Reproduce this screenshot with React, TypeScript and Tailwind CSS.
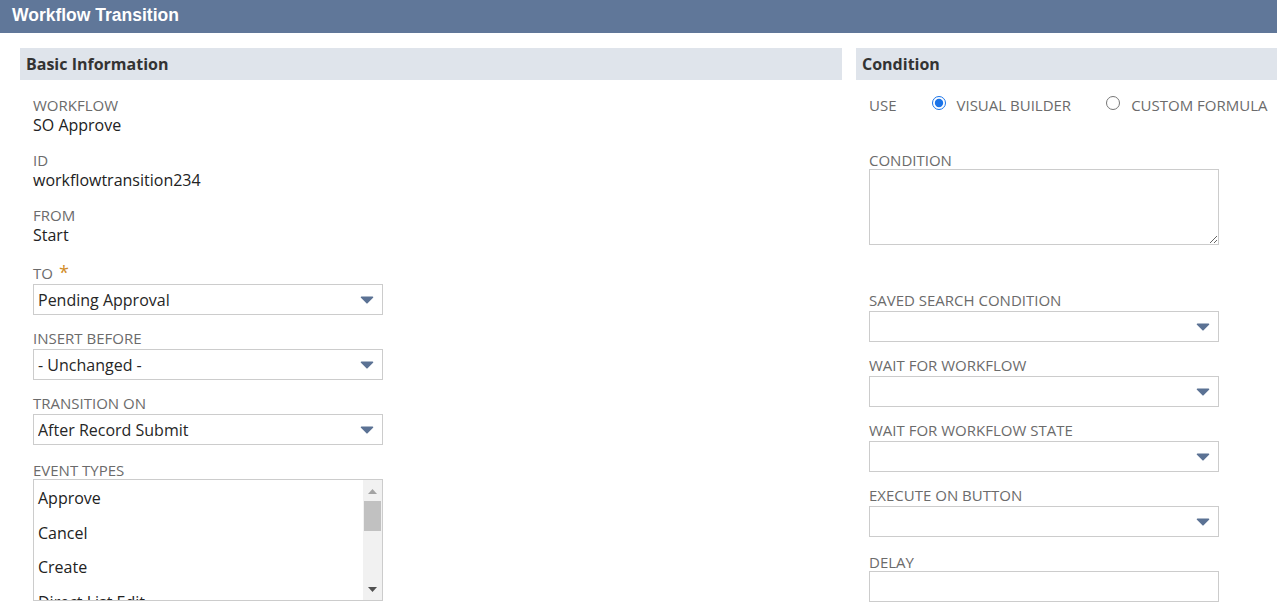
import React from "react";

const labelCls = "h-[20px] leading-[22px] text-[15px] text-[#6b6b6b] uppercase whitespace-nowrap";

function Arrow() {
  return (
    <svg width="14" height="8" viewBox="0 0 14 8" className="shrink-0">
      <path
        d="M1.5 1.2 H12.5 L7 6.8 Z"
        fill="#5b7294"
        stroke="#5b7294"
        strokeWidth="1.6"
        strokeLinejoin="round"
      />
    </svg>
  );
}

function Select({ value }: { value?: string }) {
  return (
    <div className="w-[350px] h-[31px] border border-[#cccccc] bg-white flex items-center pl-[4px] pr-[8px]">
      <span className="flex-1 text-[16px] text-[#262626] leading-[20px] truncate">{value}</span>
      <Arrow />
    </div>
  );
}

function ReadField({ label, value }: { label: string; value: string }) {
  return (
    <div className="mb-[13px]">
      <div className={labelCls}>{label}</div>
      <div className="h-[22px] leading-[22px] text-[16px] text-[#222]">{value}</div>
    </div>
  );
}

function SelectField({ label, value, required }: { label: string; value?: string; required?: boolean }) {
  return (
    <div className="mb-[14px]">
      <div className={labelCls + " flex items-end"}>
        {label}
        {required && <span className="ml-[6px] text-[#d18c27] text-[18px] leading-[18px] relative top-[-3px]">*</span>}
      </div>
      <Select value={value} />
    </div>
  );
}

function EventList() {
  const items = ["Approve", "Cancel", "Create", "Direct List Edit"];
  return (
    <div className="w-[350px] h-[122px] border border-[#cccccc] bg-white flex overflow-hidden">
      <div className="flex-1 overflow-hidden pt-[1px]">
        {items.map((it) => (
          <div key={it} className="h-[34.5px] leading-[34px] pl-[4px] text-[16px] text-[#222] whitespace-nowrap">
            {it}
          </div>
        ))}
      </div>
      <div className="w-[19px] bg-[#f1f1f1] flex flex-col items-center">
        <svg width="9" height="5" viewBox="0 0 9 5" className="mt-[9px]">
          <path d="M4.5 0 L9 5 H0 Z" fill="#a3a3a3" />
        </svg>
        <div className="w-[17px] h-[30px] bg-[#c1c1c1] mt-[7px]" />
        <div className="flex-1" />
        <svg width="9" height="5" viewBox="0 0 9 5" className="mb-[8px]">
          <path d="M0 0 H9 L4.5 5 Z" fill="#505050" />
        </svg>
      </div>
    </div>
  );
}

function SectionHead({ title }: { title: string }) {
  return (
    <div className="h-[32px] bg-[#dfe4eb] flex items-center pl-[6px] text-[16px] font-bold text-[#333]">
      {title}
    </div>
  );
}

export default function App() {
  return (
    <div className="min-h-screen bg-white font-['Open_Sans',sans-serif] overflow-hidden">
      <div className="h-[33px] bg-[#607799] flex items-center pl-[12px] pb-[2px]">
        <span className="font-['Liberation_Sans',Arial,sans-serif] font-bold text-[17.5px] text-white">
          Workflow Transition
        </span>
      </div>

      <div className="flex gap-[14px] pl-[20px] pt-[15px]">
        <div className="w-[822px] shrink-0">
          <SectionHead title="Basic Information" />
          <div className="pl-[13px] pt-[14px]">
            <ReadField label="Workflow" value="SO Approve" />
            <ReadField label="ID" value="workflowtransition234" />
            <ReadField label="From" value="Start" />
            <div className="pt-[5px]">
              <SelectField label="To" value="Pending Approval" required />
            </div>
            <SelectField label="Insert Before" value="- Unchanged -" />
            <SelectField label="Transition On" value="After Record Submit" />
            <div>
              <div className={labelCls}>Event Types</div>
              <EventList />
            </div>
          </div>
        </div>

        <div className="flex-1 min-w-0">
          <SectionHead title="Condition" />
          <div className="pl-[13px] pt-[14px]">
            <div className="h-[20px] flex items-center text-[15px] text-[#6b6b6b] uppercase whitespace-nowrap pt-[2px]">
              <span>Use</span>
              <input type="radio" name="use" defaultChecked className="ml-[35px] mr-[11px] m-0 w-[14px] h-[14px] accent-[#1a73e8] relative top-[-2px]" />
              <span>Visual Builder</span>
              <input type="radio" name="use" className="ml-[35px] mr-[11px] m-0 w-[14px] h-[14px] relative top-[-2px]" />
              <span>Custom Formula</span>
            </div>

            <div className="mt-[35px]">
              <div className={labelCls}>Condition</div>
              <textarea className="block w-[350px] h-[76px] border border-[#cccccc] outline-none" />
            </div>

            <div className="mt-[46px]">
              <SelectField label="Saved Search Condition" />
              <SelectField label="Wait For Workflow" />
              <SelectField label="Wait For Workflow State" />
              <SelectField label="Execute On Button" />
              <div>
                <div className={labelCls}>Delay</div>
                <div className="w-[350px] h-[31px] border border-[#cccccc]" />
              </div>
            </div>
          </div>
        </div>
      </div>
    </div>
  );
}
